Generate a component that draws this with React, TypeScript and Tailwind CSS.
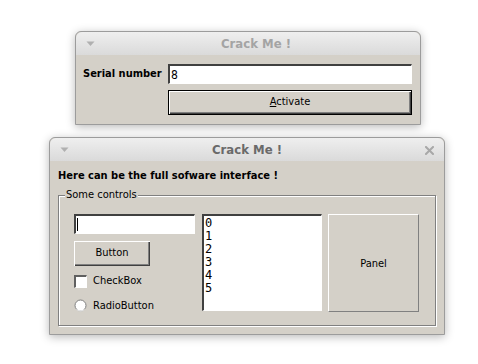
import React from "react";

const ui = { fontFamily: '"DejaVu Sans Condensed", "DejaVu Sans", sans-serif' };

function TitleBar({ title, active, close, shift }: { title: string; active?: boolean; close?: boolean; shift?: boolean }) {
  return (
    <div className="relative flex h-[23px] items-center justify-center rounded-t-[6px] bg-gradient-to-b from-[#efefef] to-[#dadada]">
      <svg className="absolute left-[10px] top-[9px]" width="9" height="6" viewBox="0 0 9 6">
        <path d="M0.5 0.5 L8.5 0.5 L4.5 5 Z" fill="#b0b0b0" />
      </svg>
      <span
        className={`whitespace-nowrap text-[13px] font-bold ${active ? "text-[#6a6a6a]" : "text-[#a4a4a4]"} ${shift ? "pl-[16px]" : ""}`}
        style={ui}
      >
        {title}
      </span>
      {close && (
        <svg className="absolute right-[10px] top-[8px]" width="9" height="9" viewBox="0 0 9 9">
          <path d="M1 1 L8 8 M8 1 L1 8" stroke="#a8a8a8" strokeWidth="2" strokeLinecap="square" />
        </svg>
      )}
    </div>
  );
}

export default function App() {
  return (
    <div className="relative h-[364px] w-[478px] overflow-hidden bg-white" style={ui}>
      {/* Window 1 */}
      <div className="absolute left-[75px] top-[31px] w-[346px] rounded-t-[6px] border border-[#9c9c9c] bg-[#d4d0c8] shadow-[0_2px_10px_rgba(0,0,0,0.28)]">
        <TitleBar title="Crack Me !" shift />
        <div className="flex h-[69px] flex-col pl-[7px] pr-[8px] pt-[9px]">
          <div className="flex items-center">
            <span className="w-[85px] whitespace-nowrap text-[11px] font-bold text-black">Serial number</span>
            <div className="flex h-[20px] flex-1 items-center border-t-2 border-l-2 border-t-[#404040] border-l-[#404040] border-b border-r border-b-white border-r-white bg-white pl-[1px] text-[12px] text-black">
              8
            </div>
          </div>
          <div className="mt-[6px] flex pl-[85px]">
            <div className="flex h-[25px] flex-1 items-center justify-center border border-black bg-[#d4d0c8] text-[11px] text-black shadow-[inset_1px_1px_0_#ffffff,inset_-1px_-1px_0_#404040,inset_-2px_-2px_0_#808080]">
              <span>
                <span className="underline">A</span>ctivate
              </span>
            </div>
          </div>
        </div>
      </div>

      {/* Window 2 */}
      <div className="absolute left-[49px] top-[137px] w-[396px] rounded-t-[6px] border border-[#9c9c9c] bg-[#d4d0c8] shadow-[0_2px_10px_rgba(0,0,0,0.28)]">
        <TitleBar title="Crack Me !" active close />
        <div className="flex h-[173px] flex-col px-[8px] pt-[6px]">
          <div className="h-[20px] whitespace-nowrap text-[11px] font-bold leading-[18px] text-black">Here can be the full sofware interface !</div>
          <div className="relative mt-[8px] h-[131px] border border-[#808080] shadow-[inset_1px_1px_0_#ffffff,1px_1px_0_#ffffff]">
            <span className="absolute left-[6px] top-[-8px] bg-[#d4d0c8] px-[1px] text-[11px] leading-[14px] text-black">Some controls</span>
            <div className="flex pl-[15px] pt-[18px]">
              <div className="flex w-[121px] flex-col">
                <div className="flex h-[20px] items-center border-t-2 border-l-2 border-t-[#404040] border-l-[#404040] border-b border-r border-b-white border-r-white bg-white pl-[1px]">
                  <div className="h-[13px] w-px bg-black" />
                </div>
                <div className="mt-[7px] flex h-[25px] w-[76px] items-center justify-center bg-[#d4d0c8] text-[11px] text-black shadow-[inset_1px_1px_0_#ffffff,inset_-1px_-1px_0_#404040,inset_-2px_-2px_0_#808080]">
                  Button
                </div>
                <div className="mt-[7px] flex items-center">
                  <div className="h-[13px] w-[13px] border-t-2 border-l-2 border-t-[#606060] border-l-[#606060] border-b border-r border-b-white border-r-white bg-white" />
                  <span className="ml-[6px] text-[11px] text-black">CheckBox</span>
                </div>
                <div className="mt-[8px] flex items-center">
                  <svg width="13" height="13" viewBox="0 0 13 13">
                    <circle cx="6.5" cy="6.5" r="5.5" fill="#ffffff" stroke="#808080" strokeWidth="1" />
                    <path d="M2.6 10.4 A5.5 5.5 0 0 0 10.4 10.4" stroke="#ffffff" strokeWidth="1" fill="none" />
                  </svg>
                  <span className="ml-[6px] text-[11px] text-black">RadioButton</span>
                </div>
              </div>
              <div
                className="ml-[7px] h-[97px] w-[120px] border-t-2 border-l-2 border-t-[#404040] border-l-[#404040] border-b border-r border-b-white border-r-white bg-white pl-[1px] pt-[1px] text-[12px] leading-[13px] text-black"
                style={{ fontFamily: '"DejaVu Sans Mono", monospace' }}
              >
                {["0", "1", "2", "3", "4", "5"].map((n) => (
                  <div key={n}>{n}</div>
                ))}
              </div>
              <div className="ml-[6px] flex h-[98px] w-[91px] items-center justify-center border-t border-l border-t-white border-l-white border-b border-r border-b-[#808080] border-r-[#808080] pt-[3px] text-[11px] text-black">
                Panel
              </div>
            </div>
          </div>
        </div>
      </div>
    </div>
  );
}
